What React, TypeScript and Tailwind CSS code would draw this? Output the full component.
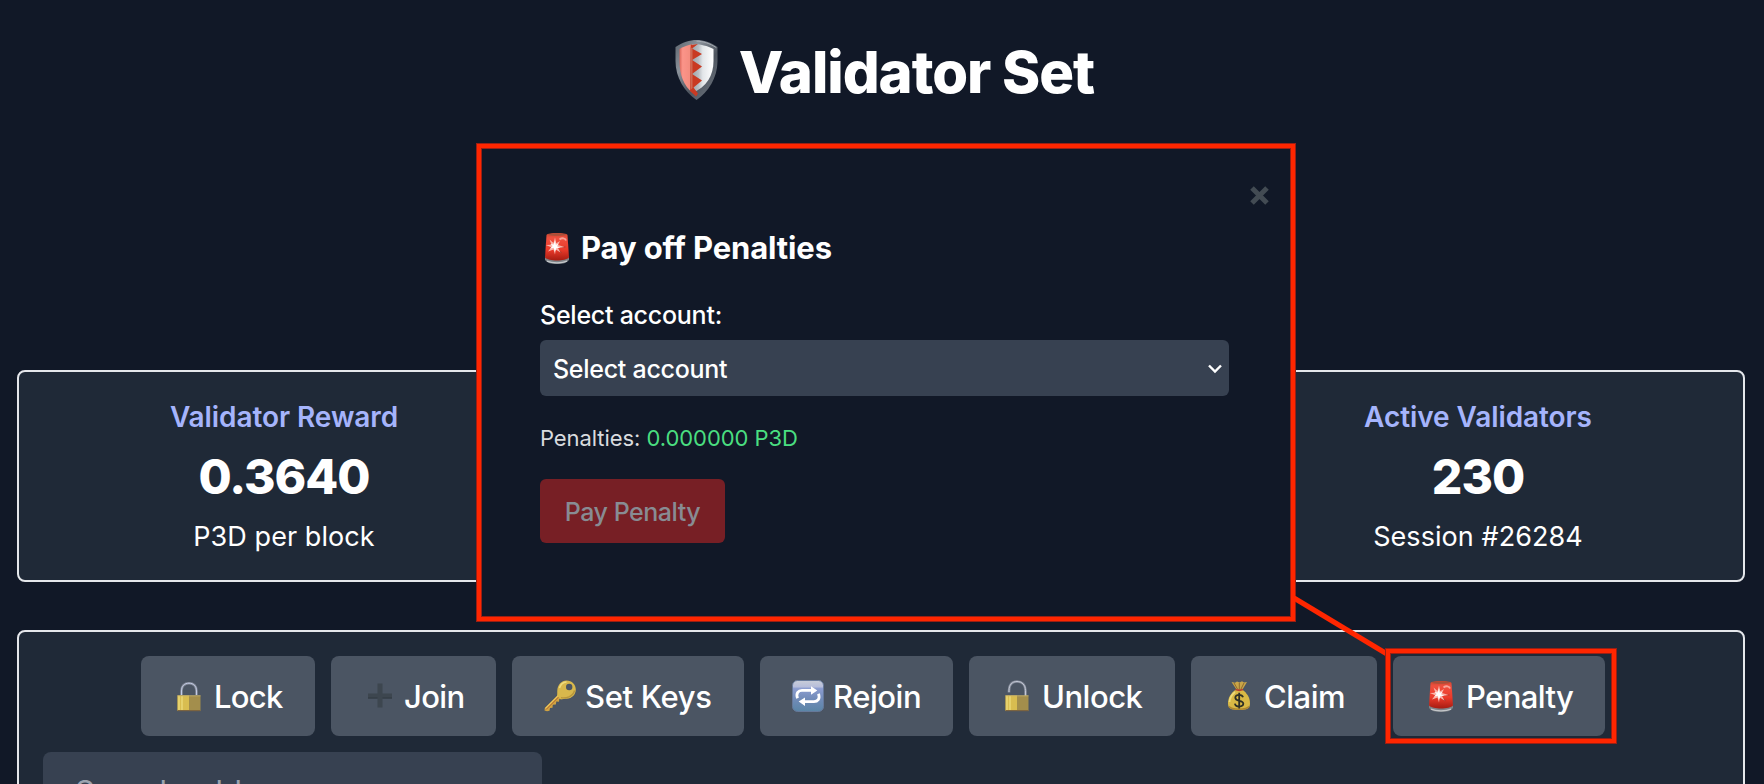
import type { ReactNode } from "react";

function ShieldIcon() {
  return (
    <svg className="h-[60px] w-[53px] shrink-0" viewBox="0 0 53 60">
      <defs>
        <linearGradient id="rim" x1="0" y1="0" x2="1" y2="1">
          <stop offset="0" stopColor="#5d646d" />
          <stop offset="0.3" stopColor="#8b929b" />
          <stop offset="0.6" stopColor="#4d545e" />
          <stop offset="1" stopColor="#757c86" />
        </linearGradient>
        <linearGradient id="steel" x1="0" x2="1">
          <stop offset="0" stopColor="#9da4a9" />
          <stop offset="0.3" stopColor="#b9bec3" />
          <stop offset="0.5" stopColor="#e3e6e9" />
          <stop offset="1" stopColor="#ffffff" />
        </linearGradient>
        <linearGradient id="coral" x1="0" x2="1">
          <stop offset="0" stopColor="#d9675b" />
          <stop offset="0.25" stopColor="#fb9489" />
          <stop offset="0.8" stopColor="#f48d80" />
          <stop offset="1" stopColor="#c9644f" />
        </linearGradient>
      </defs>
      <path d="M26.5 0C33 0 41 2.500 47.500 7v14C47.500 38 38 52 26.500 60 15 52 5.500 38 5.500 21V7C12 2.500 20 0 26.500 0Z" fill="url(#rim)" />
      <path d="M26.500 1.200C33 1.200 40 3.500 46.300 7.600" fill="none" stroke="#a9afb6" strokeWidth="0.900" />
      <path d="M22 4v49C37 47 43.500 35 43.500 21V9C38 6 30 4 22 4Z" fill="url(#steel)" />
      <path d="M22 4.300v48.200C14 46 9.500 35 9.500 21V9C14 6.500 18 5 22 4.300Z" fill="url(#coral)" />
      <path d="M21 5 28 4l-6 4.500 10 5.500-10 6 10 6.500-10 7.500 10 6.500-8.500 7 4.500 6-2 3-6-5.500Z" fill="#c93a22" />
      <path d="M22.500 8.500V48l-2 2V7Z" fill="#cf6852" />
    </svg>
  );
}

function SirenIcon({ id }: { id: string }) {
  return (
    <svg className="h-8 w-8 shrink-0" viewBox="0 0 32 32">
      <defs>
        <linearGradient id={id} x1="0" y1="0" x2="0" y2="1">
          <stop offset="0" stopColor="#c8452f" />
          <stop offset="0.180" stopColor="#f0503f" />
          <stop offset="0.600" stopColor="#ec3a2a" />
          <stop offset="1" stopColor="#a51c12" />
        </linearGradient>
      </defs>
      <path d="M4 24.500h24v3.200C26 31 21.500 32 16 32S6 31 4 27.700Z" fill="#7d8287" />
      <path d="M6 29.200c5 2.200 15 2.200 20 0" stroke="#c3c6c9" strokeWidth="1.300" fill="none" />
      <path d="M5.500 3C7 .4 25 .4 26.500 3L28 25.500c-3.500 4-20.500 4-24 0Z" fill={`url(#${id})`} />
      <path d="M6.500 2.700c4-1.700 15-1.700 19 0-4 1.300-15 1.300-19 0Z" fill="#a8503a" />
      <path d="M18.500 7.500c2.500-2 6-1.500 6.500 1" stroke="#f8a499" strokeWidth="1.800" fill="none" />
      <path d="M17 15h7.500M16 17l4.500 4" stroke="#b3382c" strokeWidth="1.200" />
      <path d="m14 5.500 1.300 5.700 3.700-2.200-2 4 6.500 2-6.500.9 2.500 4.700-4.800-3.100L14 22.500l-1.500-5L7 19.500l3.200-4.200L4.800 13l5.700-.3L8.500 7.500l4 3.500Z" fill="#fbb5ab" />
      <path d="m14 8.500.8 4.300 2.700-1.100-1.500 2.500 3.200 1.500-3.700.2-1.600 3.800-1.200-4-3.500.8 2.500-2.500-2.500-1.900 3.500.4Z" fill="#fff" />
    </svg>
  );
}

function PadlockIcon({ open = false }: { open?: boolean }) {
  return (
    <svg className="h-8 w-8 shrink-0" viewBox="0 0 32 32">
      {open ? (
        <g fill="none">
          <path d="M8 12.500V10.500C8 5 11 1.500 16 1.500S24.500 5 24.500 10.500V17" stroke="#858b99" strokeWidth="2.600" />
          <path d="M8 12V10.500C8 5 11 1.500 16 1.500S24.500 5 24.500 10.500V17" stroke="#c3c9d6" strokeWidth="1" />
        </g>
      ) : (
        <g fill="none">
          <path d="M8.500 15V11C8.500 6 11.500 3.200 16 3.200S23.500 6 23.500 11V15" stroke="#858b99" strokeWidth="2.600" />
          <path d="M8.500 15V11C8.500 6 11.500 3.200 16 3.200S23.500 6 23.500 11V15" stroke="#c3cce6" strokeWidth="1" />
        </g>
      )}
      <path d="M4.500 15.500h23V31h-23Z" fill="#a38e4c" />
      <path d="M4.500 15.500h11.500V31H4.500Z" fill="#d9bd50" />
      <path d="M6 16v14M9 16v14" stroke="#ead775" strokeWidth="1.500" />
      <path d="M4.500 15.800h23" stroke="#c9b671" strokeWidth="0.800" />
      <path d="M4.500 30.600h23" stroke="#7c6440" strokeWidth="1.200" />
    </svg>
  );
}

function PlusIcon() {
  return (
    <svg className="h-8 w-8 shrink-0" viewBox="0 0 32 32">
      <path d="M14.500 3.500h5v10H29v5h-9.500v9h-5v-9H5v-5h9.500Z" fill="#3d464f" />
      <path d="M5 18h9.500M19.500 18H29" stroke="#303941" strokeWidth="1" />
    </svg>
  );
}

function KeyIcon() {
  return (
    <svg className="h-8 w-8 shrink-0" viewBox="0 0 32 32">
      <path d="M14 15 0.800 28l-.3 2.500L3 31.300l2.500-.5.500-2.800 2.500-.2.300-3 3-.2.500-3 2.700.2.300-2.700 2-.6Z" fill="#d1a341" />
      <path d="M15 16.500 2 29.500" stroke="#a9572a" strokeWidth="1" />
      <path d="M14.500 15.300 1.500 28.300" stroke="#edc95c" strokeWidth="1.200" />
      <path fillRule="evenodd" d="M22.500 0.400c5.500 0 9.300 4 9.300 9 0 5.200-4 9-9 9.300-2 .1-4.500.3-6 .8L13 15.700c.5-1.800.1-3.500.3-5.500C13.700 4.800 17.500.4 22.500.4Zm2.700 3.400a3.200 3.200 0 1 0 0 6.400 3.200 3.200 0 0 0 0-6.400Z" fill="#d8b84c" />
      <path d="M15.500 8C16.500 4.500 19 2.200 22.500 2" stroke="#efdc7d" strokeWidth="1.600" fill="none" />
      <path d="M17 17.700c5 .8 12-.7 13.500-7.200" stroke="#b7953b" strokeWidth="1.300" fill="none" />
    </svg>
  );
}

function RepeatIcon() {
  return (
    <svg className="h-8 w-8 shrink-0" viewBox="0 0 32 32">
      <defs>
        <linearGradient id="tile" x1="0" y1="0" x2="0" y2="1">
          <stop offset="0" stopColor="#c9cdd8" />
          <stop offset="0.200" stopColor="#b7bedb" />
          <stop offset="0.260" stopColor="#8c9dd0" />
          <stop offset="0.600" stopColor="#718bb8" />
          <stop offset="1" stopColor="#5a85a6" />
        </linearGradient>
      </defs>
      <rect x="0.500" y="0.500" width="31" height="31" rx="5" fill="url(#tile)" stroke="#66799a" />
      <g fill="none" stroke="#fff" strokeWidth="2.800">
        <path d="M5.500 18.200C3.600 13 6.500 10.400 10 10.400H19.500" />
        <path d="M26.500 13.800C28.400 19 25.500 21.600 22 21.600H12.500" />
      </g>
      <path d="M19 6.300 25.300 10.400 19 14.800ZM13 17.400 6.700 21.600 13 26Z" fill="#fff" />
    </svg>
  );
}

function MoneyBagIcon() {
  return (
    <svg className="h-8 w-8 shrink-0" viewBox="0 0 32 32">
      <path d="m8.500 2 3.500.7L14 1.500l2.500 1L19 1.300l2 1.200 3-.6-4.500 7.600h-6Z" fill="#c9a548" />
      <path d="m11 3 3.500 6M21 3l-3 6M16.300 3v6" stroke="#8e6a2d" strokeWidth="1" />
      <path d="M13 9.500C8 13 5 17.500 5 23.500c0 4.500 2.500 6.500 11 6.500s11-2 11-6.500c0-6-3-10.500-8-14Z" fill="#d9b945" />
      <path d="M6.500 22c.3-4 2.500-7.500 5.500-10" stroke="#eddb7c" strokeWidth="1.700" fill="none" />
      <path d="M6 26.500c2.500 3.500 17.500 3.500 20 0" stroke="#ae8630" strokeWidth="1.500" fill="none" />
      <path d="M12.500 9.500c2 .8 5.500.8 7.500 0" stroke="#b5402f" strokeWidth="1.800" fill="none" />
      <path d="M20 17.200c-.5-1.700-2-2.300-3.800-2.300-2.300 0-3.900 1-3.900 2.900 0 4.200 8 1.800 8 5.800 0 1.900-1.800 2.900-4.100 2.900s-4-.9-4.300-2.900M16.200 12.700v15.800" stroke="#2e3026" strokeWidth="1.800" fill="none" />
    </svg>
  );
}

type Action = { label: string; icon: ReactNode; width: string; tracking: string };

const actions: Action[] = [
  { label: "Lock", icon: <PadlockIcon />, width: "w-[174px]", tracking: "tracking-[-0.7px]" },
  { label: "Join", icon: <PlusIcon />, width: "w-[165px]", tracking: "tracking-[-0.6px]" },
  { label: "Set Keys", icon: <KeyIcon />, width: "w-[232px]", tracking: "tracking-[-0.35px]" },
  { label: "Rejoin", icon: <RepeatIcon />, width: "w-[193px]", tracking: "tracking-[-0.45px]" },
  { label: "Unlock", icon: <PadlockIcon open />, width: "w-[206px]", tracking: "tracking-[-0.5px]" },
  { label: "Claim", icon: <MoneyBagIcon />, width: "w-[186px]", tracking: "tracking-[-0.5px]" },
  { label: "Penalty", icon: <SirenIcon id="siren-button" />, width: "w-[212px]", tracking: "tracking-[-0.6px]" },
];

function ActionButton({ label, icon, width, tracking }: Action) {
  return (
    <button className={`mr-4 flex h-20 shrink-0 items-center gap-[9px] rounded-lg bg-[#4b5563] pl-8 text-[31px] font-[450] whitespace-nowrap ${width} ${tracking}`}>
      {icon}
      <span className="pt-[3px]">{label}</span>
    </button>
  );
}

function Stat({ title, value, note }: { title: string; value: string; note: string }) {
  return (
    <div className="flex w-[530px] flex-col items-center gap-2.5 text-center">
      <h2 className="text-[28px] leading-10 font-[640] tracking-[-0.08px] text-[#a5b4fc]">{title}</h2>
      <p className="text-[48px] leading-[60px] font-extrabold tracking-[-1px]">{value}</p>
      <p className="text-[27px] leading-10 tracking-[0.07px]">{note}</p>
    </div>
  );
}

function PenaltyModal() {
  return (
    <section className="absolute top-[144px] left-[477px] flex h-[477px] w-[818px] flex-col border-4 border-[#ff2600] bg-[#111827] pt-20 pr-[62px] pl-[59px] shadow-[0_0_0_1px_#9a1f14,inset_0_0_0_1px_#9a1f14]">
      <button className="absolute top-[38px] right-[22px]" aria-label="Close">
        <svg className="h-[19px] w-[19px]" viewBox="0 0 19 19">
          <path d="m2 2 15 15M17 2 2 17" stroke="#434b53" strokeWidth="5" />
        </svg>
      </button>
      <h2 className="flex h-10 items-center gap-2 pl-px text-[31px] font-[750] tracking-[-0.12px]">
        <SirenIcon id="siren-heading" />
        <span className="pt-px">Pay off Penalties</span>
      </h2>
      <label className="mt-[29px] text-[25px] leading-9 font-[450] tracking-[-0.25px]">Select account:</label>
      <div className="mt-[7px] flex h-14 items-center justify-between rounded-md bg-[#374151] pr-[6px] pl-[13px] text-[25px] font-[450] tracking-[-0.28px]">
        <span className="pt-[3px]">Select account</span>
        <svg className="h-4 w-4" viewBox="0 0 16 16">
          <path d="m2 5.500 6 6 6-6" fill="none" stroke="#fff" strokeWidth="2.400" />
        </svg>
      </div>
      <p className="mt-[26px] text-[22px] leading-8 text-[#d9dbdf]">
        <span className="tracking-[-0.08px]">Penalties:</span>{" "}
        <span className="tracking-[-0.06px] text-[#4ade80]">0.000000 P3D</span>
      </p>
      <button className="mt-[25px] flex h-16 w-[185px] items-center justify-center rounded-md bg-[#771f25] pt-[3px] text-[25px] font-[450] tracking-[-0.46px] text-[#888c93]">
        Pay Penalty
      </button>
    </section>
  );
}

export default function App() {
  return (
    <main className="relative flex h-[784px] w-full flex-col overflow-hidden bg-[#111827] pr-[19px] pl-[17px] font-[Inter,'Liberation_Sans',sans-serif] text-white">
      <header className="flex h-[370px] shrink-0 items-start justify-center gap-4 pt-10 pl-0.5">
        <ShieldIcon />
        <h1 className="pt-0.5 text-[58px] leading-[60px] font-[780] tracking-[-1.05px]">Validator Set</h1>
      </header>

      <section className="flex h-[212px] shrink-0 justify-between rounded-lg border-2 border-[#e5e7eb] bg-[#1f2937] pt-[25px]">
        <Stat title="Validator Reward" value="0.3640" note="P3D per block" />
        <Stat title="Active Validators" value="230" note="Session #26284" />
      </section>

      <section className="mt-12 h-[400px] shrink-0 rounded-lg border-2 border-[#e5e7eb] bg-[#1f2937] px-6 pt-6">
        <div className="flex justify-center">
          {actions.map((action) => (
            <ActionButton key={action.label} {...action} />
          ))}
        </div>
        <div className="mt-4 flex h-20 w-[499px] items-center rounded-lg bg-[#374151] pl-8 text-[31px] text-[#9ca3af]">
          Search address
        </div>
      </section>

      <PenaltyModal />
      <svg className="absolute top-[590px] left-[1290px] h-[70px] w-[102px]" viewBox="0 0 102 70">
        <path d="m4 8 93 56" stroke="#ff2600" strokeWidth="5" />
      </svg>
      <div className="absolute top-[649px] left-[1386px] h-[94px] w-[230px] border-4 border-[#ff2600] shadow-[0_0_0_1px_#9a1f14,inset_0_0_0_1px_#9a1f14]" />
    </main>
  );
}
